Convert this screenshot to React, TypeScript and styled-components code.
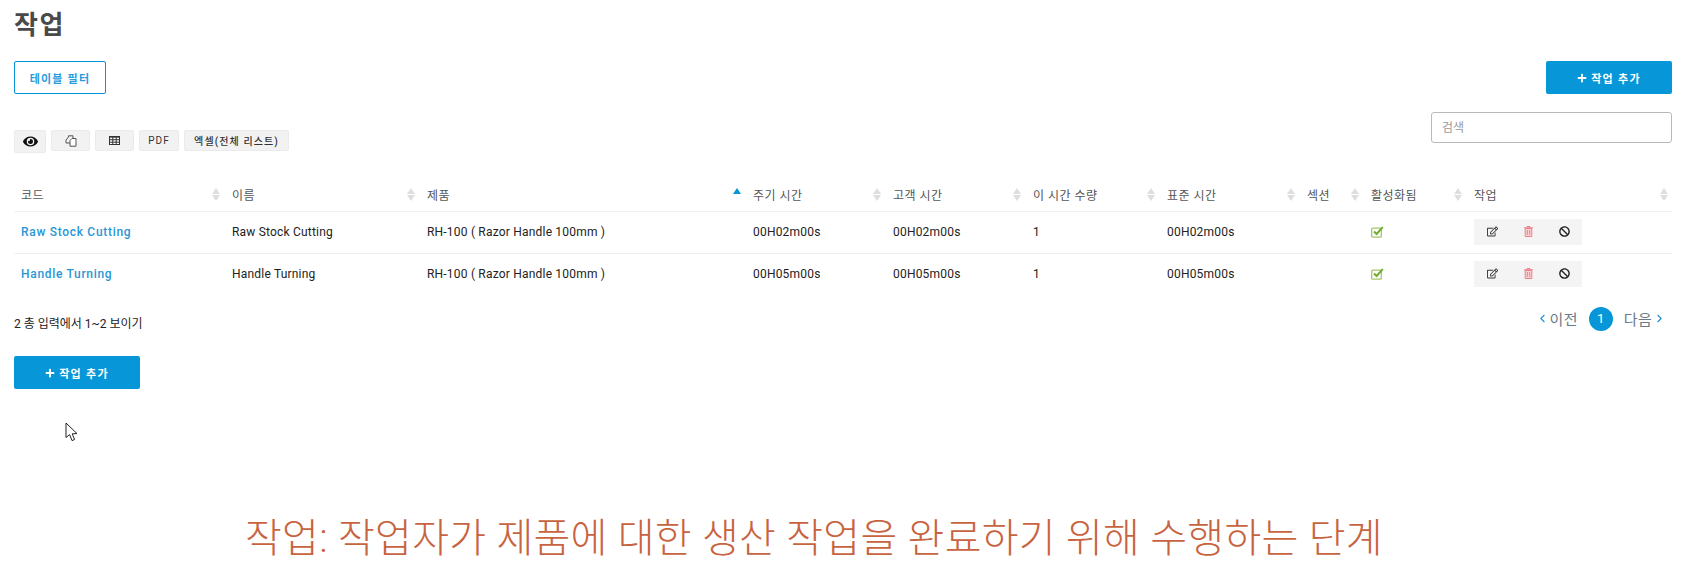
import React from "react";
import styled, { createGlobalStyle } from "styled-components";
import { FaEye, FaPlus, FaRegEdit, FaBan } from "react-icons/fa";
import { ChevronLeft, ChevronRight } from "lucide-react";

const BLUE = "#0796d8";
const FONT = `Roboto, "Noto Sans CJK KR", sans-serif`;

const GlobalStyle = createGlobalStyle`
  html, body {
    margin: 0;
    padding: 0;
    background: #fff;
    font-family: ${FONT};
    overflow: hidden;
  }
`;

const Page = styled.div`
  position: relative;
  width: 1688px;
  height: 580px;
  padding: 0 16px 0 14px;
  box-sizing: border-box;
`;

const Title = styled.h1`
  margin: 0;
  padding-top: 7px;
  height: 61px;
  box-sizing: border-box;
  font-size: 26px;
  line-height: 36px;
  font-weight: 700;
  color: #4a4a4a;
  letter-spacing: 1.5px;
`;

const TopBar = styled.div`
  display: flex;
  justify-content: space-between;
  height: 51px;
`;

const FilterButton = styled.button`
  width: 92px;
  height: 33px;
  padding: 0;
  background: #fff;
  border: 1px solid ${BLUE};
  border-radius: 2px;
  color: #2a9bdc;
  font: 700 11px ${FONT};
  letter-spacing: 1.2px;
`;

const AddButton = styled.button`
  display: flex;
  align-items: center;
  justify-content: center;
  gap: 4px;
  width: 126px;
  height: 33px;
  padding: 0;
  background: ${BLUE};
  border: 0;
  border-radius: 2px;
  color: #fff;
  font: 700 11px ${FONT};
  letter-spacing: 1.3px;
`;

const Tools = styled.div`
  display: flex;
  justify-content: space-between;
  height: 48px;
`;

const ToolGroup = styled.div`
  display: flex;
  align-items: flex-start;
  gap: 5px;
  padding-top: 18px;
`;

const ToolButton = styled.button<{ $w: number; $h?: number; $strong?: boolean }>`
  display: flex;
  align-items: center;
  justify-content: center;
  width: ${(p) => p.$w}px;
  height: ${(p) => p.$h ?? 21}px;
  padding: 0;
  background: #f2f2f2;
  border: 1px solid #ebebeb;
  border-radius: 2px;
  color: #333;
  font: ${(p) => (p.$strong ? 500 : 400)} 10px ${FONT};
  letter-spacing: 1.1px;
`;

const Search = styled.input`
  width: 241px;
  height: 31px;
  box-sizing: border-box;
  padding: 0 10px;
  border: 1px solid #b9b9c0;
  border-radius: 3px;
  font: 12px ${FONT};
  &::placeholder {
    color: #999;
  }
`;

const Table = styled.table`
  width: 1658px;
  table-layout: fixed;
  border-collapse: collapse;
`;

const Th = styled.th`
  height: 51px;
  padding: 18px 0 0 8px;
  box-sizing: border-box;
  border-bottom: 1px solid #f0f0f0;
  text-align: left;
  font-size: 12px;
  font-weight: 400;
  color: #555;
  letter-spacing: 0.5px;
  &:first-child {
    padding-left: 7px;
  }
`;

const ThInner = styled.div`
  display: flex;
  align-items: center;
  justify-content: space-between;
  padding-right: 4px;
`;

const SortIcon = styled.span`
  display: flex;
  flex-direction: column;
  gap: 1px;
`;

const Arrow = styled.i<{ $down?: boolean; $color: string }>`
  display: block;
  width: 0;
  height: 0;
  border-left: 4px solid transparent;
  border-right: 4px solid transparent;
  ${(p) => (p.$down ? "border-top" : "border-bottom")}: 6px solid ${(p) => p.$color};
`;

const Td = styled.td`
  height: 42px;
  padding: 0 0 0 8px;
  box-sizing: border-box;
  font-size: 12px;
  color: #222;
  letter-spacing: 0.2px;
  &:first-child {
    padding-left: 7px;
  }
`;

const Tr = styled.tr`
  & + & td {
    border-top: 1px solid #f0f0f0;
  }
`;

const CodeLink = styled.a`
  color: #2a96d6;
  font-weight: 500;
  letter-spacing: 0.7px;
`;

const Actions = styled.div`
  display: flex;
  width: 108px;
  height: 26px;
  background: #f4f4f4;
`;

const ActionIcon = styled.span<{ $c: string }>`
  display: flex;
  align-items: center;
  justify-content: center;
  width: 36px;
  margin-top: -1px;
  font-size: 10px;
  color: ${(p) => p.$c};
`;

const Active = styled.span`
  display: flex;
  margin-top: -1px;
`;

const Footer = styled.div`
  display: flex;
  justify-content: space-between;
  height: 61px;
`;

const Info = styled.div`
  padding-top: 21px;
  font-size: 12px;
  line-height: 16px;
  color: #222;
`;

const Pager = styled.div`
  display: flex;
  align-items: center;
  height: 47px;
  padding-right: 6px;
  gap: 11px;
  font-size: 15px;
  color: #6c7a89;
  letter-spacing: 0.3px;
`;

const PagerLink = styled.span`
  display: flex;
  align-items: center;
  gap: 1px;
  & svg {
    color: #1f8fd3;
  }
`;

const PageNo = styled.span`
  display: flex;
  align-items: center;
  justify-content: center;
  width: 24px;
  height: 24px;
  border-radius: 50%;
  background: ${BLUE};
  color: #fff;
  font-size: 13px;
`;

const Caption = styled.div`
  margin-top: 124px;
  padding-left: 231px;
  font-size: 40px;
  line-height: 52px;
  font-weight: 300;
  letter-spacing: 0.3px;
  color: #c8633f;
  white-space: nowrap;
`;

const Cursor = styled.svg`
  position: absolute;
  left: 65px;
  top: 422px;
`;

const CopyIcon = () => (
  <svg width="12" height="12" viewBox="0 0 12 12" fill="#f2f2f2" stroke="#555" strokeWidth="1">
    <path d="M1 5 L3.5 2 V0.8 H8 V8 H1 Z" />
    <path d="M5 5.5 L7 3.5 H11 V11.2 H5 Z" fill="#fff" />
  </svg>
);

const GridIcon = () => (
  <svg width="11" height="9" viewBox="0 0 11 9">
    <rect x="0.5" y="0.5" width="10" height="8" fill="#fff" stroke="#333" />
    <path d="M0 1.2 H11 M3.8 1 V9 M7.2 1 V9 M0 3.7 H11 M0 6.2 H11" stroke="#333" strokeWidth="1" />
  </svg>
);

const CheckIcon = () => (
  <svg width="13" height="12" viewBox="0 0 13 12" fill="none">
    <rect x="0.7" y="2.2" width="9.6" height="9" rx="1" stroke="#a9c46c" strokeWidth="1.3" />
    <path d="M3 5.5 L5.6 8 L11.8 1.2" stroke="#6fae2e" strokeWidth="2" />
  </svg>
);

const TrashIcon = () => (
  <svg width="9" height="11" viewBox="0 0 9 11" fill="#fbd3d5" stroke="#ec8289" strokeWidth="1">
    <path d="M1.2 2.5 H7.8 V10.5 H1.2 Z" />
    <path d="M0 1.8 H9 M3 1.5 V0.5 H6 V1.5" />
    <path d="M3.3 4 V9 M5.7 4 V9" />
  </svg>
);

const columns = ["코드", "이름", "제품", "주기 시간", "고객 시간", "이 시간 수량", "표준 시간", "섹션", "활성화됨", "작업"];
const widths = [210, 195, 326, 140, 140, 134, 140, 64, 103, 206];

const rows = [
  { name: "Raw Stock Cutting", time: "00H02m00s" },
  { name: "Handle Turning", time: "00H05m00s" },
];

const App = () => {
  return (
    <Page>
      <GlobalStyle />
      <Title>작업</Title>
      <TopBar>
        <FilterButton>테이블 필터</FilterButton>
        <AddButton>
          <FaPlus size={10} /> 작업 추가
        </AddButton>
      </TopBar>
      <Tools>
        <ToolGroup>
          <ToolButton $w={32} $h={23}>
            <FaEye size={15} color="#111" />
          </ToolButton>
          <ToolButton $w={39}>
            <CopyIcon />
          </ToolButton>
          <ToolButton $w={39}>
            <GridIcon />
          </ToolButton>
          <ToolButton $w={40}>PDF</ToolButton>
          <ToolButton $w={105} $strong>
            엑셀(전체 리스트)
          </ToolButton>
        </ToolGroup>
        <Search placeholder="검색" />
      </Tools>
      <Table>
        <colgroup>
          {widths.map((w, i) => (
            <col key={i} width={w} />
          ))}
        </colgroup>
        <thead>
          <tr>
            {columns.map((c, i) => (
              <Th key={c}>
                <ThInner>
                  {c}
                  <SortIcon>
                    <Arrow $color={i === 2 ? BLUE : "#dedede"} />
                    <Arrow $down $color={i === 2 ? "transparent" : "#dedede"} />
                  </SortIcon>
                </ThInner>
              </Th>
            ))}
          </tr>
        </thead>
        <tbody>
          {rows.map((r) => (
            <Tr key={r.name}>
              <Td>
                <CodeLink>{r.name}</CodeLink>
              </Td>
              <Td>{r.name}</Td>
              <Td>RH-100 ( Razor Handle 100mm )</Td>
              <Td>{r.time}</Td>
              <Td>{r.time}</Td>
              <Td>1</Td>
              <Td>{r.time}</Td>
              <Td />
              <Td>
                <Active>
                  <CheckIcon />
                </Active>
              </Td>
              <Td>
                <Actions>
                  <ActionIcon $c="#333">
                    <FaRegEdit size={11} />
                  </ActionIcon>
                  <ActionIcon $c="#e8606a">
                    <TrashIcon />
                  </ActionIcon>
                  <ActionIcon $c="#222">
                    <FaBan size={11} />
                  </ActionIcon>
                </Actions>
              </Td>
            </Tr>
          ))}
        </tbody>
      </Table>
      <Footer>
        <Info>2 총 입력에서 1~2 보이기</Info>
        <Pager>
          <PagerLink>
            <ChevronLeft size={13} strokeWidth={2} /> 이전
          </PagerLink>
          <PageNo>1</PageNo>
          <PagerLink>
            다음 <ChevronRight size={13} strokeWidth={2} />
          </PagerLink>
        </Pager>
      </Footer>
      <AddButton>
        <FaPlus size={10} /> 작업 추가
      </AddButton>
      <Caption>작업: 작업자가 제품에 대한 생산 작업을 완료하기 위해 수행하는 단계</Caption>
      <Cursor width="14" height="21" viewBox="0 0 14 21">
        <path d="M1 1 L1 15.5 L4.6 12.6 L7 18.6 L9.6 17.5 L7.2 11.8 L12 11.6 Z" fill="#fff" stroke="#222" strokeWidth="1" />
      </Cursor>
    </Page>
  );
};

export default App;
